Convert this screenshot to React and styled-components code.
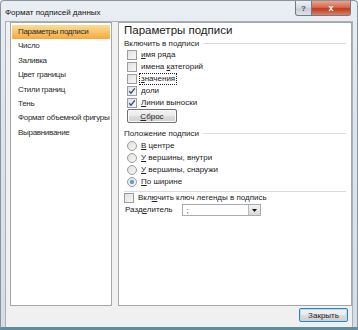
import React from 'react';
import styled, { createGlobalStyle } from 'styled-components';

const Global = createGlobalStyle`
  html, body { margin: 0; padding: 0; background: #fff; }
  body { font-family: "Liberation Sans", "DejaVu Sans", sans-serif; font-size: 8px; color: #1e1e1e; }
`;

const Window = styled.div`
  width: 358px;
  height: 330px;
  box-sizing: border-box;
  display: flex;
  flex-direction: column;
  background: linear-gradient(180deg, #e9eef3 0%, #dde3ea 40%, #d6dde4 100%);
  border: 1px solid #8a949e;
  border-bottom: 3px solid #5a8fa3;
  border-radius: 4px 4px 0 0;
`;

const TitleBar = styled.div`
  height: 20px;
  flex: none;
  display: flex;
  align-items: flex-start;
  padding: 0 6px 0 4px;
`;

const Title = styled.div`
  font-size: 8px;
  color: #111;
  padding-top: 7px;
  text-shadow: 0 0 4px #fff;
`;

const Caption = styled.div`
  margin-left: auto;
  display: flex;
`;

const CapBtn = styled.div`
  height: 14px;
  width: ${p => (p.close ? 38 : 15)}px;
  border: 1px solid #6f7c88;
  border-top: none;
  border-left: ${p => (p.close ? 'none' : '1px solid #6f7c88')};
  border-radius: ${p => (p.close ? '0 0 3px 0' : '0 0 0 3px')};
  background: ${p =>
    p.close
      ? 'linear-gradient(180deg, #e8a593 0%, #d5694f 45%, #c2391a 55%, #d8826a 100%)'
      : 'linear-gradient(180deg, #eef1f4 0%, #d5dbe1 50%, #c5ccd4 55%, #dde2e7 100%)'};
  color: ${p => (p.close ? '#fff' : '#4a5560')};
  font-size: ${p => (p.close ? 9 : 8)}px;
  font-weight: bold;
  display: flex;
  align-items: center;
  justify-content: center;
`;

const Client = styled.div`
  flex: 1;
  margin: 0 4px;
  background: #f0f0f0;
  border: 1px solid #a9b1b8;
  border-bottom: none;
  display: flex;
  flex-direction: column;
  padding: 0 4px 3px 4px;
`;

const Body = styled.div`
  display: flex;
  gap: 6px;
  height: 284px;
`;

const Panel = styled.div`
  background: #fff;
  border: 1px solid #a7a7a7;
  box-sizing: border-box;
  width: ${p => p.w}px;
  flex: none;
`;

const NavList = styled.div`
  display: flex;
  flex-direction: column;
  padding: 2px 1px;
`;

const NavItem = styled.div`
  height: 14.4px;
  line-height: 14px;
  padding-left: 6px;
  white-space: nowrap;
  letter-spacing: -0.3px;
  color: #2b2b2b;
  background: ${p => (p.active ? 'linear-gradient(180deg, #fbdc9a 0%, #f9c46a 50%, #f6a73c 100%)' : 'transparent')};
  border-radius: 1px;
`;

const Content = styled.div`
  padding: 1px 5px 0 5px;
`;

const Heading = styled.div`
  font-size: 11.5px;
  line-height: 13px;
  height: 13px;
  color: #1a1a1a;
  margin-bottom: 1px;
`;

const Group = styled.div`
  display: flex;
  align-items: center;
  gap: 4px;
  height: 11px;
  white-space: nowrap;
  &::after {
    content: '';
    flex: 1;
    border-top: 1px solid #dcdcdc;
  }
`;

const Options = styled.div`
  display: flex;
  flex-direction: column;
  padding-left: 3px;
  margin-top: ${p => p.top || 0}px;
`;

const Option = styled.div`
  display: flex;
  align-items: center;
  gap: 3px;
  height: 12px;
  white-space: nowrap;
`;

const Box = styled.span`
  width: 8px;
  height: 8px;
  border: 1px solid #9c9c9c;
  background: linear-gradient(135deg, #e2e2e2 0%, #f6f6f6 100%);
  display: flex;
  align-items: center;
  justify-content: center;
  flex: none;
  border-radius: ${p => (p.round ? '50%' : '0')};
`;

const Dot = styled.span`
  width: 4px;
  height: 4px;
  border-radius: 50%;
  background: radial-gradient(circle, #6fbde0 0%, #1f6c9c 100%);
`;

const Label = styled.span`
  color: #222;
  padding: 0 1px;
  outline: ${p => (p.focus ? '1px dotted #222' : 'none')};
  line-height: 10px;
`;

const Button = styled.div`
  width: ${p => p.w}px;
  height: 12px;
  border: 1px solid ${p => (p.def ? '#3c7fb1' : '#707070')};
  border-radius: 2px;
  background: linear-gradient(180deg, #f2f2f2 0%, #ebebeb 48%, #dddddd 52%, #cfcfcf 100%);
  box-shadow: ${p => (p.def ? 'inset 0 0 0 1px #a7e0f7' : 'inset 0 0 0 1px #fcfcfc')};
  display: flex;
  align-items: center;
  justify-content: center;
  color: #222;
  font-size: 8px;
`;

const ButtonRow = styled.div`
  padding: 0 0 5px 0;
`;

const Separator = styled.div`
  border-top: 1px solid #dcdcdc;
  margin: 3px 0 0;
`;

const SepRow = styled.div`
  display: flex;
  align-items: center;
  gap: 8px;
  height: 12px;
`;

const Select = styled.div`
  width: 79px;
  height: 12px;
  border: 1px solid #a5acb5;
  background: #fff;
  display: flex;
  align-items: center;
  padding-left: 4px;
  box-sizing: border-box;
`;

const SelectArrow = styled.div`
  margin-left: auto;
  width: 11px;
  height: 10px;
  border-left: 1px solid #b8b8b8;
  background: linear-gradient(180deg, #f4f4f4, #d8d8d8);
  display: flex;
  align-items: center;
  justify-content: center;
`;

const Footer = styled.div`
  flex: 1;
  display: flex;
  align-items: center;
  justify-content: flex-end;
`;

const Check = () => (
  <svg width="8" height="8" viewBox="0 0 8 8">
    <path d="M1.2 4.2 L3 6.2 L6.8 1.4" fill="none" stroke="#2a4f8f" strokeWidth="1.3" />
  </svg>
);

const CheckItem = ({ checked, children, focus }) => (
  <Option>
    <Box>{checked && <Check />}</Box>
    <Label focus={focus}>{children}</Label>
  </Option>
);

const RadioItem = ({ checked, children }) => (
  <Option>
    <Box round>{checked && <Dot />}</Box>
    <Label>{children}</Label>
  </Option>
);

const navItems = [
  'Параметры подписи',
  'Число',
  'Заливка',
  'Цвет границы',
  'Стили границ',
  'Тень',
  'Формат объемной фигуры',
  'Выравнивание',
];

export default function App() {
  return (
    <>
      <Global />
      <Window>
        <TitleBar>
          <Title>Формат подписей данных</Title>
          <Caption>
            <CapBtn>?</CapBtn>
            <CapBtn close>x</CapBtn>
          </Caption>
        </TitleBar>
        <Client>
          <Body>
            <Panel w={102}>
              <NavList>
                {navItems.map((t, i) => (
                  <NavItem key={t} active={i === 0}>{t}</NavItem>
                ))}
              </NavList>
            </Panel>
            <Panel w={234}>
              <Content>
                <Heading>Параметры подписи</Heading>
                <Group>Включить в подписи</Group>
                <Options>
                  <CheckItem><u>и</u>мя ряда</CheckItem>
                  <CheckItem>имена <u>к</u>атегорий</CheckItem>
                  <CheckItem focus><u>з</u>начения</CheckItem>
                  <CheckItem checked><u>д</u>оли</CheckItem>
                  <CheckItem checked><u>Л</u>инии выноски</CheckItem>
                  <ButtonRow>
                    <Button w={48}><u>С</u>брос</Button>
                  </ButtonRow>
                </Options>
                <Group>Положение подписи</Group>
                <Options top={1}>
                  <RadioItem><u>В</u> центре</RadioItem>
                  <RadioItem><u>У</u> вершины, внутри</RadioItem>
                  <RadioItem><u>У</u> вершины, снаружи</RadioItem>
                  <RadioItem checked><u>П</u>о ширине</RadioItem>
                </Options>
                <Separator />
                <CheckItem>Вкл<u>ю</u>чить ключ легенды в подпись</CheckItem>
                <SepRow>
                  <Label>Разд<u>е</u>литель</Label>
                  <Select>
                    ;
                    <SelectArrow>
                      <svg width="5" height="3" viewBox="0 0 5 3">
                        <path d="M0 0 H5 L2.5 3 Z" fill="#111" />
                      </svg>
                    </SelectArrow>
                  </Select>
                </SepRow>
              </Content>
            </Panel>
          </Body>
          <Footer>
            <Button def w={47}>Закрыть</Button>
          </Footer>
        </Client>
      </Window>
    </>
  );
}
